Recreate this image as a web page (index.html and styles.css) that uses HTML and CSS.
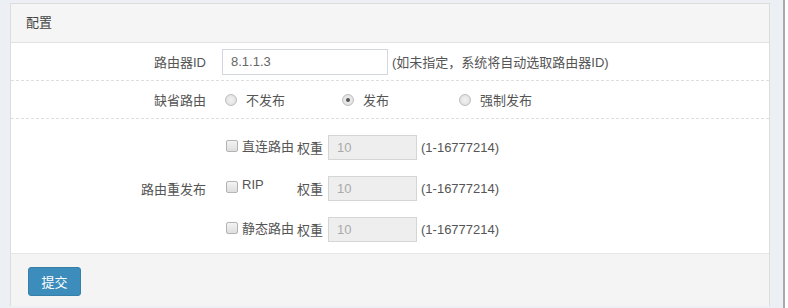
FILE: index.html
```html
<!DOCTYPE html>
<html lang="zh-CN">
<head>
  <meta charset="UTF-8">
  <title>配置</title>
  <link rel="stylesheet" href="styles.css">
</head>
<body>

<div id="page">
  <div id="content">
    <div class="box">
      <div class="box-header">配置</div>

      <div class="box-body">
        <div class="form-row">
          <div class="form-label">路由器ID</div>
          <div class="form-ctrl">
            <input type="text" class="text-input router-id" value="8.1.1.3">
            <span class="hint">(如未指定，系统将自动选取路由器ID)</span>
          </div>
        </div>

        <div class="form-row">
          <div class="form-label">缺省路由</div>
          <div class="form-ctrl">
            <label class="radio-opt"><span class="radio"></span>不发布</label>
            <label class="radio-opt"><span class="radio checked"></span>发布</label>
            <label class="radio-opt"><span class="radio"></span>强制发布</label>
          </div>
        </div>

        <div class="form-row redist">
          <div class="form-label">路由重发布</div>
          <div class="form-ctrl redist-list">
            <div class="redist-item">
              <label class="chk-opt"><span class="checkbox"></span>直连路由</label>
              <span class="weight-label">权重</span>
              <input type="text" class="text-input weight" value="10" disabled>
              <span class="hint">(1-16777214)</span>
            </div>
            <div class="redist-item">
              <label class="chk-opt"><span class="checkbox"></span><span class="rip">RIP</span></label>
              <span class="weight-label">权重</span>
              <input type="text" class="text-input weight" value="10" disabled>
              <span class="hint">(1-16777214)</span>
            </div>
            <div class="redist-item">
              <label class="chk-opt"><span class="checkbox"></span>静态路由</label>
              <span class="weight-label">权重</span>
              <input type="text" class="text-input weight" value="10" disabled>
              <span class="hint">(1-16777214)</span>
            </div>
          </div>
        </div>
      </div>

      <div class="box-footer">
        <button class="btn-submit">提交</button>
      </div>
    </div>
  </div>
  <div id="scroll-edge"></div>
</div>

</body>
</html>
```

FILE: styles.css
```css
body {
  margin: 0;
  background-color: #fff;
  font-family: "Liberation Sans", "Noto Sans CJK SC", sans-serif;
  font-size: 13px;
  color: #555;
}

#page {
  display: flex;
  height: 308px;
  overflow: hidden;
}

#content {
  width: 760px;
  padding: 3px 13px 0 10px;
  background-color: #ecf0f5;
}

#scroll-edge {
  width: 2px;
  background-color: #a9a9a9;
}

.box {
  background-color: #fff;
  border: 1px solid #dcdcdc;
  border-bottom: none;
}

.box-header {
  height: 38px;
  line-height: 38px;
  padding-left: 15px;
  background-color: #f5f5f5;
  border-bottom: 1px solid #e2e2e2;
  color: #444;
}

.form-row {
  display: flex;
  align-items: center;
  height: 37px;
  border-bottom: 1px dashed #dedede;
}

.form-label {
  width: 195px;
  padding-right: 16px;
  text-align: right;
  color: #555;
}

.form-ctrl {
  display: flex;
  align-items: center;
}

.text-input {
  box-sizing: border-box;
  height: 26px;
  padding: 0 8px;
  border: 1px solid #d2d6de;
  font-family: inherit;
  font-size: 13px;
  color: #666;
  background-color: #fff;
  outline: none;
}

.router-id {
  width: 166px;
}

.hint {
  margin-left: 4px;
  color: #555;
}

.radio-opt {
  display: flex;
  align-items: center;
  width: 117px;
  color: #555;
}

.radio {
  box-sizing: border-box;
  width: 12px;
  height: 12px;
  margin: 0 9px 0 3px;
  border: 1px solid #bdbdbd;
  border-radius: 50%;
  background: radial-gradient(circle, #f2f2f2 0, #dcdcdc 100%);
  position: relative;
}

.radio.checked::after {
  content: "";
  position: absolute;
  left: 3px;
  top: 3px;
  width: 4px;
  height: 4px;
  border-radius: 50%;
  background-color: #555;
}

.redist {
  height: auto;
  padding: 16px 0 11px;
  border-bottom: 1px solid #e6e6e6;
}

.redist-list {
  flex-direction: column;
  align-items: flex-start;
  gap: 16px;
}

.redist-item {
  display: flex;
  align-items: center;
  height: 25px;
}

.chk-opt {
  display: flex;
  align-items: center;
  width: 75px;
  color: #555;
  position: relative;
  top: -2px;
}

.checkbox {
  box-sizing: border-box;
  width: 12px;
  height: 12px;
  margin: 0 4px 0 4px;
  border: 1px solid #b3b3b3;
  border-radius: 2px;
  background: linear-gradient(#f3f3f3, #dedede);
}

.rip {
  position: relative;
  top: -2px;
}

.weight-label {
  margin-right: 5px;
  color: #555;
}

.weight {
  width: 89px;
  height: 25px;
  background-color: #eee;
  border-color: #d5d5d5;
  color: #aaa;
}

.box-footer {
  height: 52px;
  padding: 13px 0 0 17px;
  box-sizing: border-box;
  background-color: #f4f4f4;
}

.btn-submit {
  width: 53px;
  height: 29px;
  border: 1px solid #367fa9;
  border-radius: 3px;
  background-color: #3c8dbc;
  color: #fff;
  font-family: inherit;
  font-size: 13px;
  cursor: pointer;
}
```
